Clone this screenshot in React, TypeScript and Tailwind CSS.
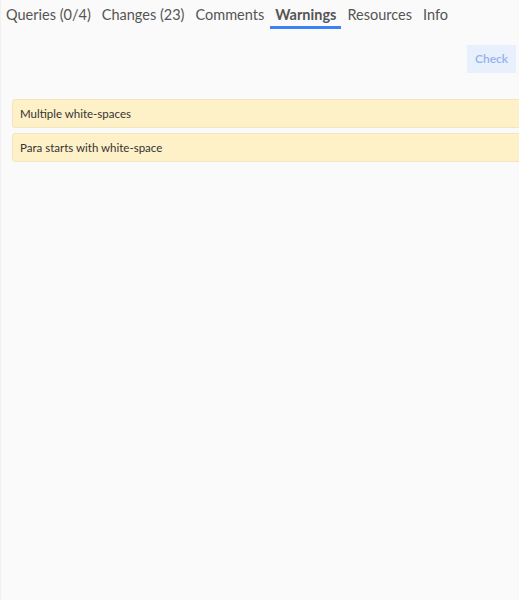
const tabs = ['Queries (0/4)', 'Changes (23)', 'Comments', 'Warnings', 'Resources', 'Info'];

const warnings = ['Multiple white-spaces', 'Para starts with white-space'];

export default function App() {
  return (
    <div className="h-[600px] w-[519px] overflow-hidden bg-[#fafafa] border-l border-[#f0f0f0] font-['Lato','Noto_Sans',sans-serif]">
      <div className="flex pl-[5px] gap-[11px] h-[29px]">
        {tabs.map((t) => (
          <div
            key={t}
            className={
              t === 'Warnings'
                ? 'px-[5px] pt-[4px] text-[14.5px] font-bold text-[#555] border-b-[3px] border-[#3b82f6] -mx-[5px]'
                : 'pt-[4px] text-[14.5px] text-[#555]'
            }
          >
            {t}
          </div>
        ))}
      </div>
      <div className="flex justify-end pr-[3px] pt-[16px]">
        <button className="h-[28px] w-[49px] bg-[#e8f0fe] text-[#93b2ee] text-[12px] font-semibold">
          Check
        </button>
      </div>
      <div className="flex flex-col gap-[5px] pl-[11px] pt-[26px] -mr-[4px]">
        {warnings.map((w) => (
          <div
            key={w}
            className="h-[29px] flex items-center px-[7px] bg-[#fff1c7] border border-[#f3e6bc] rounded-[3px] text-[11.5px] text-[#333]"
          >
            {w}
          </div>
        ))}
      </div>
    </div>
  );
}
